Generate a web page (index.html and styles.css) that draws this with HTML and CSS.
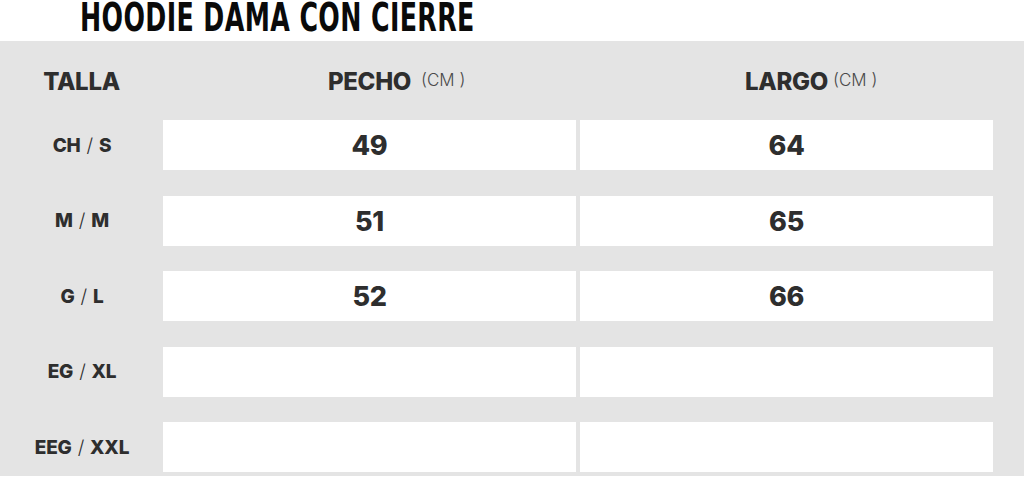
FILE: index.html
```html
<!DOCTYPE html>
<html lang="es">
<head>
<meta charset="utf-8">
<title>Hoodie Dama con Cierre</title>
<link rel="stylesheet" href="styles.css">
</head>
<body>
<div class="page">
  <header class="title-bar">
    <h1 class="title">HOODIE DAMA CON CIERRE</h1>
  </header>
  <section class="panel">
    <div class="head-row">
      <div class="head-cell">TALLA</div>
      <div class="head-cell"><span class="head-word">PECHO<span class="unit unit-wide">(CM )</span></span></div>
      <div class="head-cell"><span class="head-word">LARGO<span class="unit">(CM )</span></span></div>
    </div>
    <div class="rows">
      <div class="row"><div class="size">CH <span class="slash">/</span> S</div><div class="cell">49</div><div class="cell">64</div></div>
      <div class="row"><div class="size">M <span class="slash">/</span> M</div><div class="cell">51</div><div class="cell">65</div></div>
      <div class="row"><div class="size">G <span class="slash">/</span> L</div><div class="cell">52</div><div class="cell">66</div></div>
      <div class="row"><div class="size">EG <span class="slash">/</span> XL</div><div class="cell"></div><div class="cell"></div></div>
      <div class="row"><div class="size">EEG <span class="slash">/</span> XXL</div><div class="cell"></div><div class="cell"></div></div>
    </div>
  </section>
</div>
</body>
</html>
```

FILE: styles.css
```css
* { box-sizing: border-box; }
html, body { margin: 0; padding: 0; background: #ffffff; }
body { width: 1024px; height: 478px; font-family: "Inter", "Lato", sans-serif; color: #2e2e2e; }

.title-bar { height: 41px; padding-left: 80px; }
.title {
  margin: 0;
  height: 41px;
  font-family: "DejaVu Sans Condensed", "DejaVu Sans", sans-serif;
  font-weight: 700;
  font-size: 37px;
  line-height: 41px;
  color: #0a0a0a;
  transform: translateY(-3px) scale(0.76, 1.06);
  transform-origin: left center;
  white-space: nowrap;
  letter-spacing: 0.5px;
}

.panel { background: #e4e4e4; height: 435px; padding-right: 31px; }

.head-row, .row {
  display: grid;
  grid-template-columns: 159px 413px 413px;
  column-gap: 4px;
}
.head-row { height: 79px; align-items: center; }
.head-cell {
  text-align: center;
  font-weight: 800;
  font-size: 24px;
  letter-spacing: -0.3px;
  padding-top: 2px;
}
.head-cell:first-child { padding-left: 4px; }
.head-word { position: relative; }
.unit {
  position: absolute;
  left: 100%;
  top: 3px;
  margin-left: 5px;
  font-weight: 300;
  font-size: 17px;
  color: #4a4a4a;
  white-space: nowrap;
  letter-spacing: 0;
}
.unit-wide { margin-left: 10px; }

.rows { display: flex; flex-direction: column; row-gap: 25.5px; }
.row { height: 50px; }
.size {
  display: flex;
  align-items: center;
  justify-content: center;
  padding-left: 5px;
  font-weight: 800;
  font-size: 19px;
  letter-spacing: -0.2px;
}
.slash { font-weight: 300; margin: 0 6px; }
.cell {
  background: #ffffff;
  display: flex;
  align-items: center;
  justify-content: center;
  font-weight: 800;
  font-size: 27px;
  letter-spacing: -0.3px;
  padding-top: 1px;
}
```
